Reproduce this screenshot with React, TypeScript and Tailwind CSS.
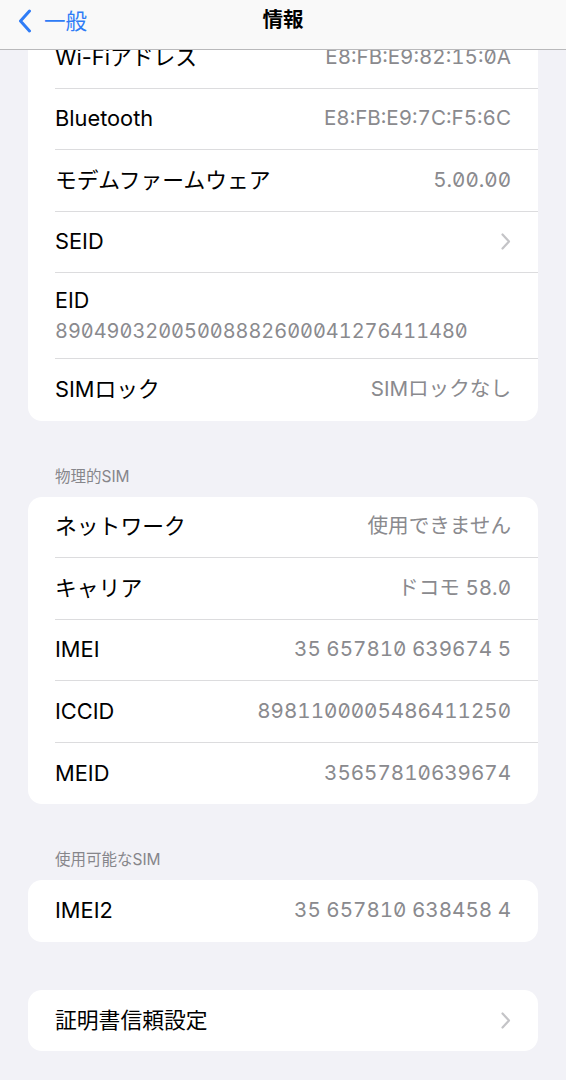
import React from "react";

type Row = {
  label: string;
  value?: string;
  chevron?: boolean;
  stacked?: boolean;
};

const font = { fontFamily: 'Inter, "Noto Sans CJK JP", sans-serif' };

function Chevron() {
  return (
    <svg width="10" height="17" viewBox="0 0 10 17" fill="none" className="shrink-0">
      <path d="M1.5 1.5 L8 8.5 L1.5 15.5" stroke="#c4c4c7" strokeWidth="2.2" strokeLinecap="round" strokeLinejoin="round" />
    </svg>
  );
}

function Card({ rows }: { rows: Row[] }) {
  return (
    <div className="mx-[28px] overflow-hidden rounded-[14px] bg-white">
      {rows.map((r, i) => {
        const last = i === rows.length - 1;
        return (
          <div key={r.label} className="pl-[27px]">
            {r.stacked ? (
              <div
                className={`flex h-[86px] flex-col justify-center pr-[27px] ${last ? "" : "border-b border-[#dcdcde]"}`}
              >
                <span className="text-[21.5px] leading-[28px] text-black">{r.label}</span>
                <span className="mt-[3px] text-[19.9px] leading-[28px] text-[#8a8a8e] tabular-nums slashed-zero">
                  {r.value}
                </span>
              </div>
            ) : (
              <div
                className={`flex h-[61.5px] items-center justify-between pr-[27px] ${last ? "" : "border-b border-[#dcdcde]"}`}
              >
                <span className="text-[21.8px] text-black">{r.label}</span>
                {r.chevron ? (
                  <Chevron />
                ) : (
                  <span className="text-[20.6px] text-[#8a8a8e] tabular-nums slashed-zero">{r.value}</span>
                )}
              </div>
            )}
          </div>
        );
      })}
    </div>
  );
}

function SectionTitle({ children }: { children: React.ReactNode }) {
  return (
    <div className="mt-[46px] mb-[10px] px-[55px] text-[15.5px] leading-[20px] text-[#86868b]">{children}</div>
  );
}

export default function App() {
  return (
    <div className="relative h-[1080px] w-[566px] overflow-hidden bg-[#f2f2f7]" style={font}>
      <div className="absolute inset-x-0 top-0 z-10 flex h-[50px] items-start border-b border-[#b9b9bb] bg-[#f9f9f9]">
        <div className="flex items-center pl-[18px] pt-[9px]">
          <svg width="14" height="24" viewBox="0 0 14 24" fill="none">
            <path d="M11.5 2 L2.5 12 L11.5 22" stroke="#2f7cf6" strokeWidth="3" strokeLinecap="round" strokeLinejoin="round" />
          </svg>
          <span className="ml-[12px] text-[21.5px] leading-[24px] text-[#2f7cf6]">一般</span>
        </div>
        <div className="absolute left-1/2 top-[7px] -translate-x-1/2 text-[20.5px] font-bold leading-[26px] text-black">
          情報
        </div>
      </div>

      <div className="pt-[27px]">
        <Card
          rows={[
            { label: "Wi-Fiアドレス", value: "E8:FB:E9:82:15:0A" },
            { label: "Bluetooth", value: "E8:FB:E9:7C:F5:6C" },
            { label: "モデムファームウェア", value: "5.00.00" },
            { label: "SEID", chevron: true },
            { label: "EID", value: "89049032005008882600041276411480", stacked: true },
            { label: "SIMロック", value: "SIMロックなし" },
          ]}
        />

        <SectionTitle>物理的SIM</SectionTitle>
        <Card
          rows={[
            { label: "ネットワーク", value: "使用できません" },
            { label: "キャリア", value: "ドコモ 58.0" },
            { label: "IMEI", value: "35 657810 639674 5" },
            { label: "ICCID", value: "8981100005486411250" },
            { label: "MEID", value: "35657810639674" },
          ]}
        />

        <SectionTitle>使用可能なSIM</SectionTitle>
        <Card rows={[{ label: "IMEI2", value: "35 657810 638458 4" }]} />

        <div className="h-[48px]" />
        <Card rows={[{ label: "証明書信頼設定", chevron: true }]} />
      </div>
    </div>
  );
}
